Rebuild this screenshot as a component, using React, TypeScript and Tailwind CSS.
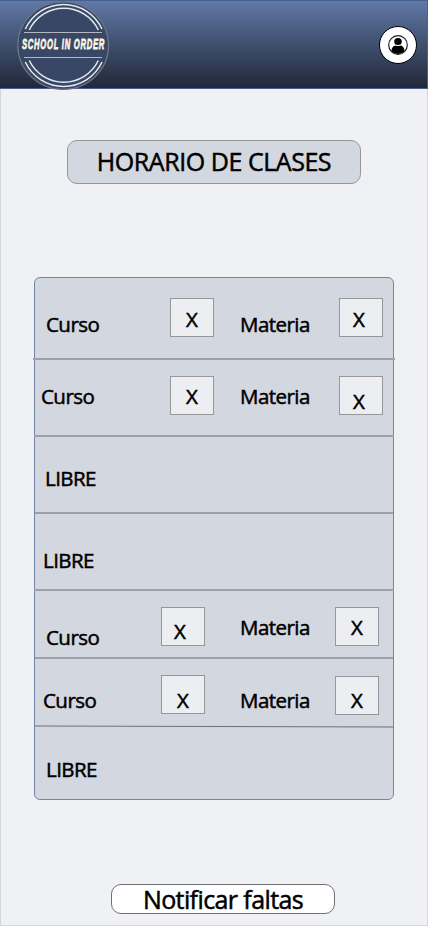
import type { ReactNode } from "react";

const ink =
  "block h-6 whitespace-nowrap text-[20.5px] leading-6 tracking-[-0.55px] text-black [-webkit-text-stroke:0.5px_black]";

function Label({ children, className }: { children: ReactNode; className: string }) {
  return (
    <div className={`shrink-0 pl-px ${className}`}>
      <span className={ink}>{children}</span>
    </div>
  );
}

function Mark({ className }: { className: string }) {
  return (
    <div className={`h-[39px] w-11 shrink-0 border border-[#96979b] bg-[#edeef2] ${className}`}>
      <span className={ink}>X</span>
    </div>
  );
}

function Row({ children, className }: { children?: ReactNode; className: string }) {
  return <div className={`flex items-start border-[#9fa0a6] ${className}`}>{children}</div>;
}

function Logo() {
  return (
    <svg className="ml-4 mt-px h-[90px] w-[94px] shrink-0 overflow-visible" viewBox="16 1 94 90">
      <ellipse cx="63.2" cy="45.6" rx="45.4" ry="43.8" fill="#384766" stroke="#6e7683" strokeWidth="1.2" />
      <g fill="none" stroke="#e4e9f0" strokeWidth="1.5">
        <path d="M25.3 29A42.3 42.3 0 0 1 102 29" />
        <path d="M29.3 30A38.3 38.3 0 0 1 98.3 30" />
        <path d="M25.3 62A42.3 42.3 0 0 0 102 62" />
        <path d="M29.3 60.5A38.3 38.3 0 0 0 98.3 60.5" />
      </g>
      <path d="M24 32.5H102M24 57.5H102" stroke="#b5b8bd" strokeWidth="1" />
      <text
        x="22"
        y="49"
        textLength="83"
        lengthAdjust="spacingAndGlyphs"
        fill="#fbf8e4"
        stroke="#fbf8e4"
        strokeWidth="0.8"
        className="font-['Liberation_Sans_Narrow','Liberation_Sans',sans-serif] text-[15px] font-bold tracking-[1.5px] italic"
      >
        SCHOOL IN ORDER
      </text>
    </svg>
  );
}

function Avatar() {
  return (
    <svg className="mr-[9px] mt-[25px] h-10 w-10 shrink-0" viewBox="0 0 40 40">
      <circle cx="20" cy="19" r="18.5" fill="#fff" stroke="#000" />
      <circle cx="20" cy="19" r="9.3" fill="#fff" stroke="#222" strokeWidth="1.2" />
      <ellipse cx="20" cy="15.5" rx="3.8" ry="3.6" />
      <path d="M13.4 25.2C13.5 21.6 15.2 19.8 17.5 19.4Q20 20.6 22.5 19.4C24.8 19.8 26.5 21.6 26.6 25.2A9.3 9.3 0 0 1 13.4 25.2Z" />
    </svg>
  );
}

export default function App() {
  return (
    <div className="flex h-[926px] w-[428px] flex-col items-center overflow-hidden bg-[#f0f1f5] font-['Open_Sans','Noto_Sans',sans-serif]">
      <header className="flex h-[89px] w-full shrink-0 items-start justify-between border-y border-r border-[#46608f] bg-linear-to-b from-[#6079a8] to-[#212938]">
        <div className="-mt-px">
          <Logo />
        </div>
        <Avatar />
      </header>
      <main className="flex w-full grow flex-col items-center border-x border-b border-[#d6d7da]">
        <h1 className="mt-[51px] flex h-11 w-[294px] items-center justify-center rounded-[10px] border border-[#96979a] bg-[#d3d7e0] pb-0.5 text-[25px] leading-8 tracking-[-0.45px] whitespace-nowrap text-black [-webkit-text-stroke:0.5px_black]">
          HORARIO DE CLASES
        </h1>
        <section className="mt-[93px] h-[523px] w-[360px] rounded-md border border-[#7486a8] bg-[#d3d7e0]">
          <Row className="-mx-0.5 h-[82px] border-b-2 px-0.5">
            <Label className="ml-[10px] mt-[34px] w-[60px]">Curso</Label>
            <Mark className="ml-[65px] mt-5 pl-[15px] pt-2" />
            <Label className="ml-[25px] mt-[34px] w-[75px]">Materia</Label>
            <Mark className="ml-[25px] mt-5 pl-[13px] pt-2" />
          </Row>
          <Row className="-mx-px h-[77px] border-b-2 px-px">
            <Label className="ml-[5px] mt-6 w-[65px]">Curso</Label>
            <Mark className="ml-[65px] mt-4 pl-[15px] pt-[7px]" />
            <Label className="ml-[25px] mt-6 w-[75px]">Materia</Label>
            <Mark className="ml-[25px] mt-4 pl-[13px] pt-3" />
          </Row>
          <Row className="h-[77px] border-b-2">
            <Label className="ml-[9px] mt-[29px]">LIBRE</Label>
          </Row>
          <Row className="-mx-px h-[77px] border-b-2 px-px">
            <Label className="ml-[7px] mt-[34px]">LIBRE</Label>
          </Row>
          <Row className="h-[68px] border-b-2">
            <Label className="ml-[10px] mt-[34px] w-[60px]">Curso</Label>
            <Mark className="ml-[56px] mt-4 pl-3 pt-[11px]" />
            <Label className="ml-[34px] mt-6 w-[75px]">Materia</Label>
            <Mark className="ml-[21px] mt-4 pl-[15px] pt-[7px]" />
          </Row>
          <Row className="h-[66px]">
            <Label className="ml-[7px] mt-[29px] w-[60px]">Curso</Label>
            <Mark className="ml-[59px] mt-4 pl-[15px] pt-3" />
            <Label className="ml-[34px] mt-[29px] w-[75px]">Materia</Label>
            <Mark className="ml-[21px] mt-[17px] pl-[15px] pt-[11px]" />
          </Row>
          {/* The last divider slopes down by one pixel. */}
          <svg className="block h-[3px] w-[358px]" viewBox="0 0 358 3">
            <path d="M0 1L358 2" stroke="#6e7072" strokeWidth="1" />
          </svg>
          <Row className="h-[69px]">
            <Label className="ml-[10px] mt-[29px]">LIBRE</Label>
          </Row>
        </section>
        <button className="ml-[18px] mt-[84px] flex h-[30px] w-[224px] items-center justify-center rounded-[10px] border border-[#707174] bg-white text-[25px] leading-7 tracking-[-0.6px] whitespace-nowrap text-black [-webkit-text-stroke:0.5px_black]">
          Notificar faltas
        </button>
      </main>
    </div>
  );
}
